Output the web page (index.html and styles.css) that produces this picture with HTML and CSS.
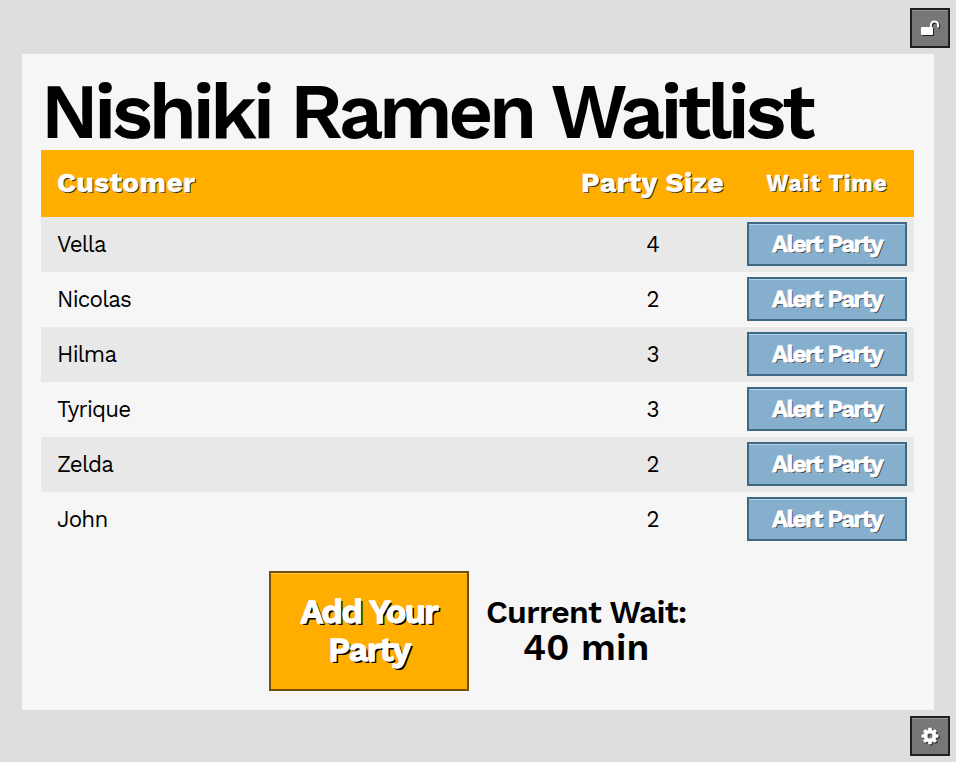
FILE: index.html
```html
<!DOCTYPE html>
<html lang="en">
<head>
<meta charset="utf-8">
<title>Nishiki Ramen Waitlist</title>
<link rel="stylesheet" href="styles.css">
</head>
<body>
<main class="panel">
  <h1 class="title">Nishiki Ramen Waitlist</h1>
  <table class="waitlist">
    <colgroup><col class="col-name"><col class="col-size"><col class="col-wait"></colgroup>
    <thead>
      <tr><th class="name">Customer</th><th>Party Size</th><th class="wait">Wait Time</th></tr>
    </thead>
    <tbody>
      <tr><td class="name">Vella</td><td>4</td><td><button class="btn alert">Alert Party</button></td></tr>
      <tr><td class="name">Nicolas</td><td>2</td><td><button class="btn alert">Alert Party</button></td></tr>
      <tr><td class="name">Hilma</td><td>3</td><td><button class="btn alert">Alert Party</button></td></tr>
      <tr><td class="name">Tyrique</td><td>3</td><td><button class="btn alert">Alert Party</button></td></tr>
      <tr><td class="name">Zelda</td><td>2</td><td><button class="btn alert">Alert Party</button></td></tr>
      <tr><td class="name">John</td><td>2</td><td><button class="btn alert">Alert Party</button></td></tr>
    </tbody>
  </table>
  <div class="footer">
    <button class="btn add">Add Your<br>Party</button>
    <div class="current"><div class="label">Current Wait:</div><div class="value">40 min</div></div>
  </div>
</main>
<button class="btn tool lock" aria-label="Unlock">
  <svg width="20" height="18" viewBox="0 0 20 18"><rect x="1" y="8" width="12" height="8" rx="1"/><path d="M10.9 8.5V6a3.6 3.6 0 0 1 7.2 0V8.5" fill="none" stroke="#fff" stroke-width="2"/></svg>
</button>
<button class="btn tool gear" aria-label="Settings">
  <svg width="18" height="18" viewBox="0 0 18 18"><path fill-rule="evenodd" stroke="#fff" stroke-width=".6" stroke-linejoin="round" d="M7.7 1h2.6l.5 2.2 1.1.5 2-1.2 1.7 1.7-1.2 2 .5 1.1 2.2.5v2.5l-2.2.5-.5 1.1 1.2 2-1.7 1.7-2-1.2-1.1.5-.5 2.2H7.7l-.5-2.2-1.1-.5-2 1.2-1.7-1.7 1.2-2-.5-1.1-2.2-.5V7.8l2.2-.5.5-1.1-1.2-2 1.7-1.7 2 1.2 1.1-.5zM9 6.2a2.8 2.8 0 1 0 0 5.6 2.8 2.8 0 0 0 0-5.6z"/></svg>
</button>
</body>
</html>
```

FILE: styles.css
```css
* { box-sizing: border-box; }
html, body { height: 100%; overflow: hidden; }
body {
  margin: 0;
  padding: 54px 22px 52px;
  background: #dedede;
  color: #000;
  font-family: "Work Sans", Inter, sans-serif;
}
.panel {
  height: 656px;
  padding: 24px 20px 0 19px;
  background: #f6f6f6;
}
.title {
  margin: 0;
  height: 72px;
  line-height: 66px;
  font-size: 78px;
  font-weight: 600;
  letter-spacing: -4.4px;
  white-space: nowrap;
}
.waitlist {
  width: 873px;
  table-layout: fixed;
  border-collapse: collapse;
}
.col-name { width: 524px; }
.col-size { width: 175px; }
.col-wait { width: 174px; }
th, td { padding: 0; text-align: center; vertical-align: middle; }
thead tr { height: 67px; background: #ffae00; }
th {
  padding-bottom: 2px;
  font-size: 28px;
  font-weight: 700;
  letter-spacing: 0.45px;
  color: #fff;
  -webkit-text-stroke: 0.3px #fff;
  text-shadow: 1px 1px 0 #222;
}
th.wait { font-size: 22.4px; letter-spacing: 1.1px; }
.name { padding-left: 16px; text-align: left; }
tbody tr { height: 55px; font-size: 22.4px; }
tbody .name { letter-spacing: -0.8px; }
tbody tr:nth-child(odd) { background: #e8e8e8; }
td { padding-bottom: 1px; }
td:nth-child(2) { padding-left: 1px; }
.btn {
  padding: 0;
  font-family: inherit;
  font-weight: 700;
  color: #fff;
  border: 2px solid;
  border-radius: 0;
}
.alert {
  display: block;
  width: 160px;
  height: 44px;
  margin: 0 auto;
  background: #86aecd;
  border-color: #3f6884;
  box-shadow: inset 0 1px 0 #b2d3ea;
  font-size: 24px;
  font-weight: 600;
  letter-spacing: -1.6px;
  -webkit-text-stroke: 0.9px #fff;
  text-shadow: 1px 1px 0 #222;
}
.footer {
  display: flex;
  margin-top: 24px;
  padding-left: 228px;
  gap: 17px;
}
.add {
  width: 200px;
  height: 120px;
  padding-bottom: 2px;
  background: #ffae00;
  border-color: #72500d;
  box-shadow: inset 0 1px 0 #ffc33d;
  font-size: 34px;
  font-weight: 600;
  line-height: 38px;
  letter-spacing: -1.4px;
  -webkit-text-stroke: 1.3px #fff;
  text-shadow: 2px 2px 0 #000;
}
.current { padding-top: 24px; width: 200px; text-align: center; font-weight: 600; white-space: nowrap; }
.label { font-size: 32px; line-height: 35px; letter-spacing: -0.75px; }
.value { font-size: 37px; line-height: 35px; }
.tool {
  position: absolute;
  right: 6px;
  display: grid;
  place-items: center;
  width: 40px;
  height: 40px;
  background: #777;
  border-color: #1f1f1f;
  box-shadow: inset 0 1px 0 #999;
}
.tool svg { fill: #fff; filter: drop-shadow(1px 1px 0 #222); }
.lock { top: 8px; }
.gear { bottom: 6px; }
```
